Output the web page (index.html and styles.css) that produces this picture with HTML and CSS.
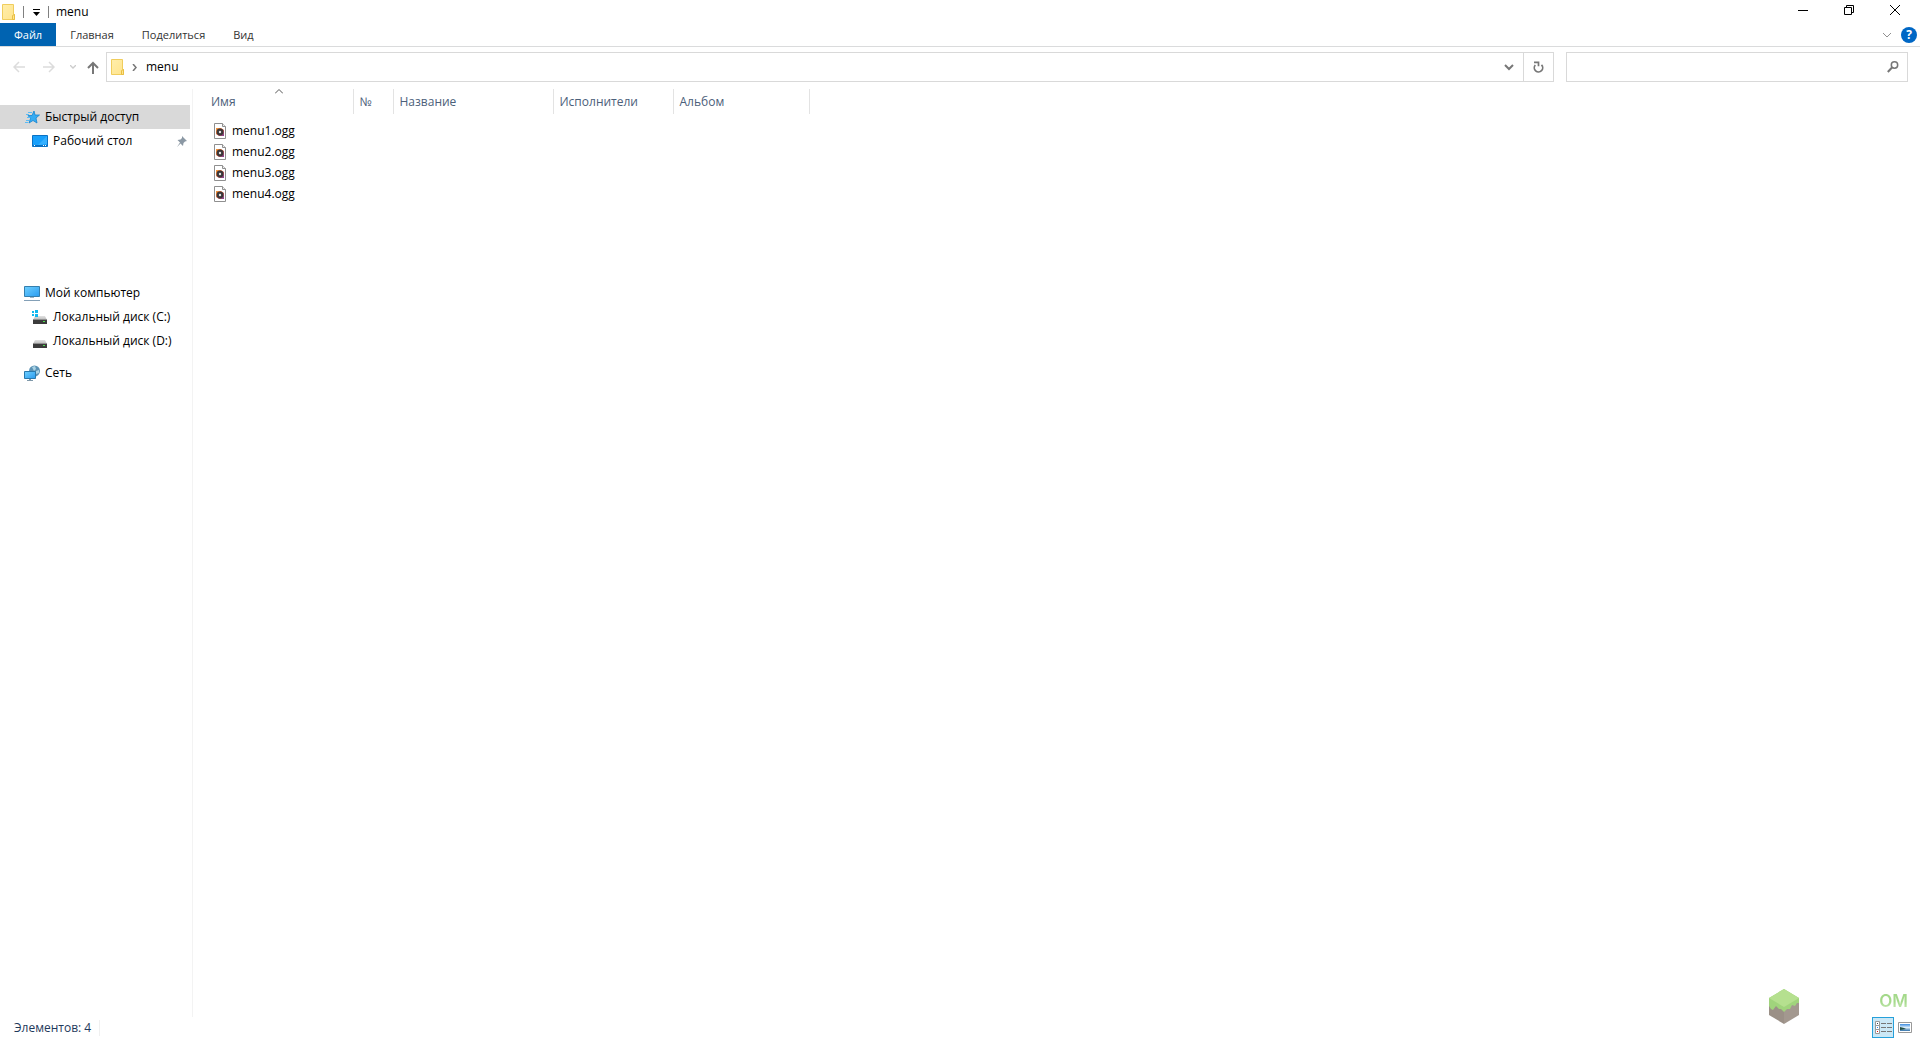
FILE: index.html
```html
<!DOCTYPE html>
<html lang="ru">
<head>
<meta charset="utf-8">
<title>menu</title>
<link rel="stylesheet" href="styles.css">
</head>
<body>
<svg class="defs" aria-hidden="true">
  <defs>
    <linearGradient id="blue" x1="0" y1="0" x2="1" y2="1"><stop offset="0" stop-color="#6fd0ff"/><stop offset="1" stop-color="#2a9cf0"/></linearGradient>
    <linearGradient id="drive" x1="0" y1="0" x2="0" y2="1"><stop offset="0" stop-color="#e2e2e2"/><stop offset="1" stop-color="#b8b8b8"/></linearGradient>
    <linearGradient id="disc" x1="0" y1="0" x2="1" y2="1"><stop offset="0" stop-color="#f7a03c"/><stop offset="0.5" stop-color="#d9603c"/><stop offset="1" stop-color="#7b3c9c"/></linearGradient>
    <linearGradient id="folder-fill" x1="0" y1="0" x2="1" y2="1"><stop offset="0" stop-color="#ffeeab"/><stop offset="1" stop-color="#ffe48c"/></linearGradient>
    <linearGradient id="photo" x1="0" y1="0" x2="0" y2="1"><stop offset="0" stop-color="#3c8be0"/><stop offset="0.5" stop-color="#dceefa"/><stop offset="1" stop-color="#2f6fa8"/></linearGradient>
  </defs>
  <symbol id="folder" viewBox="0 0 13 16">
    <path d="M.5.5h11v10h1v5H.5z" fill="url(#folder-fill)" stroke="#f0cd5d"/>
    <path d="M10.500 15.500v-4l2-1v5z" fill="#ffe48c" stroke="#e9bf43"/>
  </symbol>
  <symbol id="ogg" viewBox="0 0 12 16">
    <path d="M.5.5h8l3 3v12H.5z" fill="#fff" stroke="#8f8f8f"/>
    <path d="M8.500.5v3h3" fill="#eee" stroke="#8f8f8f"/>
    <path d="M2 5h5l3 2v6H5L2 11z" fill="url(#disc)"/>
    <circle cx="6" cy="9" r="3.400" fill="#3a3638"/>
    <circle cx="6" cy="9" r="1.200" fill="#e4e4e4"/>
  </symbol>
  <symbol id="hdd" viewBox="0 0 16 16">
    <path d="M3 7h10l2 4H1z" fill="url(#drive)"/>
    <path d="M1 10h14v5H1z" fill="#3b3b3b"/>
    <path d="M1 10h14v1H1z" fill="#909090"/>
    <path d="M11 12h2v1h-2z" fill="#4ce04c"/>
  </symbol>
</svg>

<header class="titlebar">
  <svg class="folder" width="13" height="16"><use href="#folder"/></svg>
  <span class="tick"></span>
  <button class="quick" aria-label="Настройка панели быстрого доступа"><svg width="7" height="8"><path d="M0 1h7v1H0zM0 4h7L3.500 8z" fill="#000"/></svg></button>
  <span class="tick"></span>
  <h1>menu</h1>
  <div class="controls">
    <button aria-label="Свернуть"><svg width="10" height="10"><path d="M0 5.500h10" stroke="#000"/></svg></button>
    <button aria-label="Восстановить"><svg width="10" height="10" fill="none" stroke="#000"><path d="M.5 2.500h7v7h-7zM2.500 2.500v-2h7v7h-2"/></svg></button>
    <button aria-label="Закрыть"><svg width="10" height="10"><path d="M0 0l10 10M10 0L0 10" stroke="#000"/></svg></button>
  </div>
</header>

<nav class="ribbon">
  <button class="file">Файл</button>
  <button>Главная</button>
  <button>Поделиться</button>
  <button>Вид</button>
  <div class="help">
    <button aria-label="Развернуть ленту"><svg width="10" height="6"><path d="M1 1l4 4 4-4" fill="none" stroke="#909090"/></svg></button>
    <button class="question" aria-label="Справка">?</button>
  </div>
</nav>

<div class="navbar">
  <div class="arrows">
    <button aria-label="Назад"><svg width="12" height="12" fill="none" stroke="#dcdcdc" stroke-width="1.500"><path d="M12 6H1M6 1L1 6l5 5"/></svg></button>
    <button aria-label="Вперёд"><svg width="12" height="12" fill="none" stroke="#dcdcdc" stroke-width="1.500"><path d="M0 6h11M6 1l5 5-5 5"/></svg></button>
    <button class="narrow" aria-label="Последние расположения"><svg width="6" height="4"><path d="M0 0l3 3 3-3" fill="none" stroke="#ccc" stroke-width="1.300"/></svg></button>
    <button class="up" aria-label="Вверх"><svg width="12" height="13" fill="none" stroke="#777" stroke-width="2"><path d="M6 13V2M1 7l5-5 5 5"/></svg></button>
  </div>
  <div class="address">
    <svg class="folder" width="13" height="16"><use href="#folder"/></svg>
    <svg class="crumb" width="5" height="7"><path d="M1 0l3 3.500L1 7" fill="none" stroke="#777" stroke-width="1.500"/></svg>
    <a href="#menu">menu</a>
    <button class="history" aria-label="Предыдущие расположения"><svg width="10" height="7"><path d="M1 1l4 4 4-4" fill="none" stroke="#777" stroke-width="2"/></svg></button>
    <button class="refresh" aria-label="Обновить"><svg width="11" height="12" fill="none" stroke="#777" stroke-width="1.700"><path d="M2.300 4A4.200 4.200 0 1 0 8.500 3.800"/><path d="M1 1.300h4.500v4"/></svg></button>
  </div>
  <div class="search">
    <input type="text" aria-label="Поиск">
    <button aria-label="Найти"><svg width="12" height="12" fill="none" stroke="#777"><circle cx="7.500" cy="4" r="3.200" stroke-width="1.500"/><path d="M5 6.500L.8 11" stroke-width="2"/></svg></button>
  </div>
</div>

<main class="body">
  <nav class="tree">
    <a class="selected" href="#quick"><svg width="16" height="16"><path d="M10 2l1 4h4.500L12 9l1 5-4-2.500L5 14l1.500-4.500L4 6.500h4z" fill="#35abf2" stroke="#1584cf" stroke-width=".8"/><path d="M4 3.500h4M2 5.500h3M3 8.500h3M2 11.500h3M1 13.500h3" stroke="#5bbcf4"/></svg>Быстрый доступ</a>
    <a class="child" href="#desktop"><svg width="16" height="16"><path d="M.5 2.500h15v11H.5z" fill="#18a0fb" stroke="#0b72c4"/><path d="M15 3v8L6 12z" fill="#35b0ff"/><path d="M1 12.500h14" stroke="#0a6fc0"/><path d="M2 12.500h1M11 12.500h1M13 12.500h1" stroke="#fff"/></svg>Рабочий стол<svg class="pin" width="10" height="11"><path d="M5 0l5 5-2 .5-1.500 1.500-.5 3-2.500-2.500L0 11l3-4.500L.5 4l3-.5L5 2z" fill="#8b98a4"/></svg></a>
    <a class="computer" href="#computer"><svg width="16" height="16"><path d="M.5 1.500h15v10H.5z" fill="url(#blue)" stroke="#347fae"/><path d="M6 12h4v1H6z" fill="#9cb4c6"/><path d="M0 15.500h16" stroke="#84a0b7"/></svg>Мой компьютер</a>
    <a class="child" href="#c"><svg width="16" height="16"><use href="#hdd"/><path d="M0 1h7v6H0z" fill="#fff"/><path d="M0 2h2v2H0zM3 1h3v3H3zM0 5h2v2H0zM3 5h3v3H3z" fill="#12b7ee"/></svg>Локальный диск (C:)</a>
    <a class="child" href="#d"><svg width="16" height="16"><use href="#hdd"/></svg>Локальный диск (D:)</a>
    <a class="network" href="#network"><svg width="16" height="16"><circle cx="10.500" cy="6" r="5.500" fill="#5c93b5"/><path d="M8 2l3-1 1 3-2 2zM12 6l3-1v3l-3 1z" fill="#a9d2e4"/><path d="M.5 6.500h11v7H.5z" fill="url(#blue)" stroke="#2879ad"/><path d="M5 14h2v1h2v1H3v-1h2z" fill="#8099aa"/></svg>Сеть</a>
  </nav>
  <section class="files">
    <table>
      <colgroup><col class="c-name"><col class="c-num"><col class="c-title"><col class="c-artist"><col class="c-album"></colgroup>
      <thead><tr>
        <th class="sorted" aria-sort="ascending">Имя<svg width="8" height="5"><path d="M0 4.500l4-4 4 4" fill="none" stroke="#555"/></svg></th>
        <th>№</th><th>Название</th><th>Исполнители</th><th>Альбом</th>
      </tr></thead>
      <tbody>
        <tr><td colspan="5"><a href="#1"><svg width="12" height="16"><use href="#ogg"/></svg>menu1.ogg</a></td></tr>
        <tr><td colspan="5"><a href="#2"><svg width="12" height="16"><use href="#ogg"/></svg>menu2.ogg</a></td></tr>
        <tr><td colspan="5"><a href="#3"><svg width="12" height="16"><use href="#ogg"/></svg>menu3.ogg</a></td></tr>
        <tr><td colspan="5"><a href="#4"><svg width="12" height="16"><use href="#ogg"/></svg>menu4.ogg</a></td></tr>
      </tbody>
    </table>
  </section>
</main>

<footer class="status">
  <span class="count">Элементов: 4</span>
  <div class="views">
    <button class="active" aria-label="Таблица"><svg width="17" height="13"><g fill="#fff" stroke="#999"><path d="M.5.5h4v4h-4zM.5 4.500h4v4h-4zM.5 8.500h4v4h-4z"/></g><path d="M2 2h1v1H2z" fill="#345"/><path d="M2 6h1v1H2z" fill="#2a80f0"/><path d="M2 10h1v1H2z" fill="#e01010"/><path d="M6 2.500h5M12 2.500h5M6 6.500h5M12 6.500h5M6 10.500h5M12 10.500h5" stroke="#777"/></svg></button>
    <button aria-label="Крупные значки"><svg width="14" height="11"><path d="M.5.5h13v10H.5z" fill="#fff" stroke="#999"/><path d="M2 2h10v7H2z" fill="url(#photo)"/><path d="M2 5l4 1 2 1-6 1z" fill="#254f45"/></svg></button>
  </div>
</footer>

<div class="watermark">
  <svg width="32" height="36" viewBox="0 0 32 36"><path d="M1 9l15 9v17L1 26z" fill="#9b9087"/><path d="M31 9l-15 9v17l15-9z" fill="#a3988f"/><path d="M16 0l15 9v5l-2 0-2 3-3-1-2 4-3 0-3 3-3-3-2 0-3-3-3 4-2-1-2-3V9z" fill="#a0d47c"/><path d="M16 0l15 9-15 9L1 9z" fill="#b5e08f"/></svg>
  <span>OM</span>
</div>
</body>
</html>
```
FILE: styles.css
```css
* { box-sizing: border-box; }
body {
  margin: 0;
  min-height: 100vh;
  display: flex;
  flex-direction: column;
  background: #fff;
  color: #000;
  font: 12px/16px "Open Sans", "Noto Sans", sans-serif;
}
button { border: 0; padding: 0; background: none; font: inherit; color: inherit; display: flex; align-items: center; justify-content: center; }
a { color: inherit; text-decoration: none; }
svg { display: block; flex: none; }
.defs { position: absolute; width: 0; height: 0; }

.titlebar { display: flex; align-items: center; height: 23px; padding-left: 2px; }
.tick { width: 1px; height: 12px; background: #808080; }
.titlebar .folder { margin-right: 8px; }
.quick { width: 24px; height: 23px; }
h1 { margin: 0 0 0 7px; font-size: 12px; font-weight: 400; }
.controls { display: flex; margin-left: auto; padding-right: 2px; align-self: flex-start; }
.controls button { width: 46px; height: 20px; }

.ribbon { display: flex; height: 24px; border-bottom: 1px solid #dadbdc; font-size: 11px; color: #333; }
.ribbon button { padding: 0 14px; }
.ribbon .file { background: #0063b1; color: #fff; }
.help { display: flex; align-items: center; gap: 9px; margin-left: auto; padding-right: 3px; }
.ribbon .help button { padding: 0; }
.ribbon .question { width: 16px; height: 16px; border-radius: 50%; background: #0067c5; color: #fff; font-size: 12px; font-weight: 700; }

.navbar { display: flex; padding: 5px 12px 0 0; }
.arrows { display: flex; width: 106px; padding-left: 4px; }
.arrows button { width: 30px; height: 30px; }
.arrows .narrow { width: 17px; }
.arrows .up { width: 24px; }
.address { flex: 1; display: flex; align-items: center; height: 30px; border: 1px solid #d9d9d9; padding-left: 4px; }
.crumb { margin: 0 9px 0 8px; }
.history { width: 29px; height: 28px; margin-left: auto; }
.refresh { width: 30px; height: 28px; border-left: 1px solid #d9d9d9; }
.search { display: flex; width: 342px; height: 30px; margin-left: 12px; border: 1px solid #d9d9d9; }
.search input { flex: 1; min-width: 0; border: 0; padding: 0 8px; font: inherit; outline: 0; }
.search button { width: 28px; }

.body { flex: 1; display: flex; padding-top: 7px; }
.tree { width: 193px; padding: 16px 2px 0 0; border-right: 1px solid #f3f3f3; }
.tree a { display: flex; align-items: center; gap: 5px; height: 24px; padding-left: 24px; }
.tree .child { padding-left: 32px; }
.tree .selected { background: #d9d9d9; }
.tree .computer { margin-top: 128px; }
.tree .network { margin-top: 8px; }
.pin { margin: 0 3px 0 auto; }

.files { flex: 1; }
table { border-collapse: collapse; table-layout: fixed; width: 616px; }
.c-name { width: 160px; }
.c-num { width: 40px; }
.c-title { width: 160px; }
.c-artist { width: 120px; }
.c-album { width: 136px; }
th { position: relative; height: 25px; padding: 0 0 0 6px; border-right: 1px solid #e3e3e3; text-align: left; font-weight: 400; color: #4c607a; }
th.sorted { padding-left: 18px; }
.sorted svg { position: absolute; top: 0; left: 82px; }
td { height: 21px; padding: 0; }
tbody::before { content: ""; display: block; height: 6px; }
td a { display: inline-flex; align-items: center; gap: 6px; padding-left: 21px; vertical-align: top; }

.status { display: flex; align-items: center; height: 21px; padding-left: 14px; color: #1e395b; }
.count { padding-right: 8px; border-right: 1px solid #f0f0f0; }
.views { display: flex; margin-left: auto; padding-right: 4px; }
.views button { width: 22px; height: 21px; }
.views .active { border: 1px solid #26a0da; background: #cbe8f6; }

.watermark { position: absolute; right: 12px; bottom: 13px; display: flex; justify-content: space-between; width: 140px; pointer-events: none; }
.watermark span { font: 600 17px/24px Inter, sans-serif; background: linear-gradient(#a4d98a 35%, #e4f6d8 75%); background-clip: text; color: transparent; }
```
